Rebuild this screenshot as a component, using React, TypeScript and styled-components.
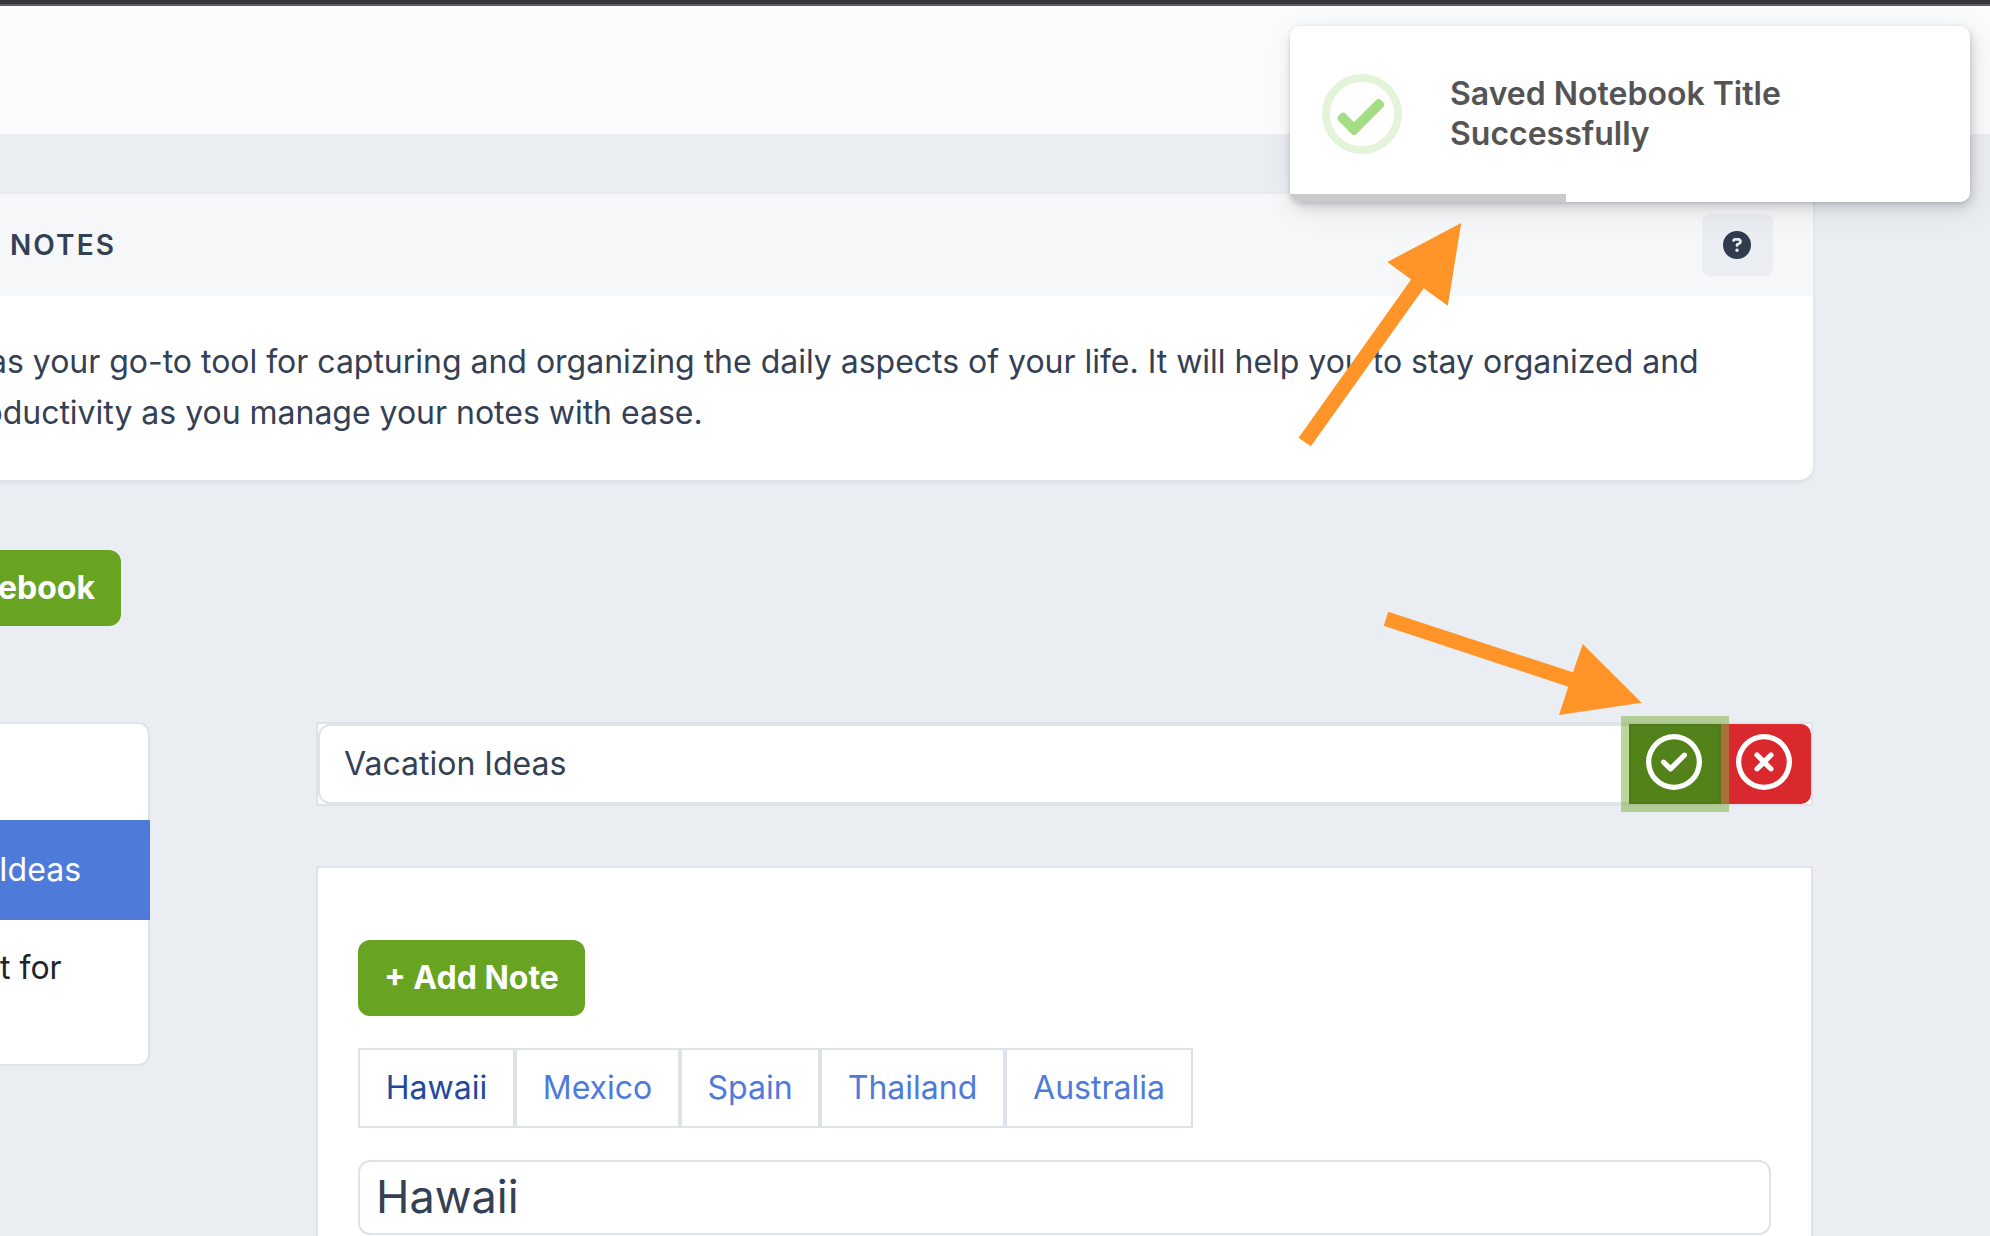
import React from "react";
import styled, { createGlobalStyle, css } from "styled-components";
import { FaRegCircleCheck, FaRegCircleXmark, FaCircleQuestion } from "react-icons/fa6";

const GlobalStyle = createGlobalStyle`
  * { box-sizing: border-box; }
  html, body { margin: 0; padding: 0; }
  body {
    background: #eaeef3;
    color: #344054;
    font-family: Inter, "Liberation Sans", sans-serif;
    font-size: 32px;
    line-height: 48px;
    overflow: hidden;
  }
`;

const Page = styled.div`
  position: relative;
  display: flex;
  flex-direction: column;
  width: 1990px;
  height: 1236px;
  overflow: hidden;
`;

const BrowserEdge = styled.div`
  flex: none;
  height: 6px;
  background: #35363a;
  border-bottom: 2px solid #5e5f63;
`;

const TopBar = styled.header`
  flex: none;
  height: 128px;
  background: #fafbfd;
`;

const Main = styled.main`
  display: flex;
  flex-direction: column;
  flex: none;
  width: 1813px;
  padding-top: 60px;
`;

const Card = styled.section`
  height: 286px;
  margin-left: -20px;
  background: #fff;
  border-bottom-right-radius: 14px;
  box-shadow: 0 2px 4px rgba(53, 64, 82, 0.1);
`;

const CardHeader = styled.div`
  display: flex;
  align-items: center;
  justify-content: space-between;
  height: 102px;
  padding: 0 40px 0 30px;
  background: #f6f7f9;
`;

const CardTitle = styled.h2`
  margin: 0;
  font-size: 28px;
  font-weight: 600;
  letter-spacing: 2.1px;
`;

const HelpButton = styled.button`
  display: flex;
  align-items: center;
  justify-content: center;
  width: 71px;
  height: 62px;
  padding: 0 2px 0 0;
  border: 0;
  border-radius: 8px;
  background: #eaedf2;
  color: #2f3c4e;
  font-size: 28px;
`;

const CardBody = styled.div`
  padding: 40px 0 0 20px;
  line-height: 51px;
  letter-spacing: -0.016px;
`;

const Line = styled.div<{ $shift: number }>`
  margin-left: ${(p) => p.$shift}px;
  white-space: nowrap;
`;

const GreenButton = styled.button<{ $width: number; $clipped?: boolean }>`
  display: flex;
  align-items: center;
  justify-content: ${(p) => (p.$clipped ? "flex-end" : "center")};
  width: ${(p) => p.$width}px;
  height: 76px;
  padding: 0 ${(p) => (p.$clipped ? "26px 0 0" : "0")};
  border: 0;
  border-radius: ${(p) => (p.$clipped ? "0 12px 12px 0" : "12px")};
  background: #68a321;
  color: #fff;
  font: 700 32px/48px Inter, sans-serif;
  white-space: nowrap;
`;

const Actions = styled.div`
  padding: 70px 0 96px;
`;

const Columns = styled.div`
  display: flex;
  justify-content: space-between;
  align-items: flex-start;
`;

const List = styled.ul`
  width: 150px;
  height: 344px;
  margin: 0;
  padding: 0;
  list-style: none;
  background: #fff;
  border: 2px solid #dee3ea;
  border-left: 0;
  border-radius: 0 12px 12px 0;
`;

const ListItem = styled.li<{ $active?: boolean; $height: number }>`
  height: ${(p) => p.$height}px;
  padding: 24px 0;
  color: #212529;
  white-space: nowrap;
  ${(p) =>
    p.$active &&
    css`
      margin-right: -2px;
      padding: 26px 0;
      background: #4e7ada;
      color: #fff;
      text-indent: -1px;
    `}
`;

const Editor = styled.div`
  width: 1497px;
`;

const TitleGroup = styled.div`
  display: flex;
  height: 84px;
  border: 2px solid #dee3ea;
  background: #fff;
`;

const TitleInput = styled.input`
  flex: 1;
  min-width: 0;
  height: 80px;
  padding: 0 24px 2px;
  border: 2px solid #dee3ea;
  border-right: 0;
  border-radius: 12px 0 0 12px;
  outline: 0;
  background: #fff;
  color: #344054;
  font: 400 32px/48px Inter, sans-serif;
`;

const IconButton = styled.button<{ $kind: "save" | "cancel" }>`
  display: flex;
  align-items: center;
  justify-content: center;
  flex: none;
  width: 92px;
  height: 80px;
  padding: 0 2px 4px 0;
  font-size: 56px;
  color: #fff;
  ${(p) =>
    p.$kind === "save"
      ? css`
          position: relative;
          z-index: 1;
          border: 2px solid #4e7a19;
          background: #53821a;
          box-shadow: 0 0 0 8px rgba(127, 177, 66, 0.52);
        `
      : css`
          margin-left: -2px;
          border: 0;
          border-radius: 0 10px 10px 0;
          background: #d9292e;
        `}
`;

const Panel = styled.div`
  height: 420px;
  margin-top: 60px;
  padding: 72px 40px 0;
  border: 2px solid #dee3ea;
  background: #fff;
`;

const Tabs = styled.nav`
  display: flex;
  margin: 32px 0;
`;

const Tab = styled.a<{ $width: number; $active?: boolean }>`
  display: flex;
  align-items: center;
  justify-content: center;
  width: ${(p) => p.$width}px;
  height: 80px;
  border: 2px solid #dee3ea;
  color: ${(p) => (p.$active ? "#2149a0" : "#4e7ada")};
`;

const NoteTitle = styled.input`
  display: block;
  width: 1413px;
  height: 75px;
  padding: 0 16px 2px;
  border: 2px solid #dee3ea;
  border-radius: 12px;
  outline: 0;
  color: #344054;
  font: 400 45px/60px Inter, sans-serif;
`;

const Toast = styled.div`
  position: absolute;
  z-index: 5;
  top: 26px;
  left: 1290px;
  display: flex;
  align-items: center;
  width: 680px;
  height: 176px;
  padding: 0 32px;
  gap: 48px;
  border-radius: 10px;
  overflow: hidden;
  background: #fff;
`;

const ToastShadow = styled.div`
  position: absolute;
  z-index: 4;
  top: 26px;
  left: 1290px;
  width: 680px;
  height: 176px;
  border-radius: 10px;
  box-shadow: 0 0 2px rgba(0, 0, 0, 0.075), 0 2px 4px rgba(0, 0, 0, 0.075),
    2px 4px 8px rgba(0, 0, 0, 0.075), 2px 6px 16px rgba(0, 0, 0, 0.075),
    4px 8px 32px rgba(0, 0, 0, 0.075);
`;

const ToastTitle = styled.h2`
  margin: 0;
  width: 400px;
  color: #545454;
  font-size: 32px;
  font-weight: 600;
  line-height: 40px;
`;

const ToastProgress = styled.div`
  position: absolute;
  bottom: 0;
  left: 0;
  width: 276px;
  height: 8px;
  background: #cacaca;
`;

const Annotations = styled.svg`
  position: absolute;
  z-index: 6;
  top: 0;
  left: 0;
  pointer-events: none;
`;

const tabs = [
  { label: "Hawaii", width: 157 },
  { label: "Mexico", width: 165 },
  { label: "Spain", width: 140 },
  { label: "Thailand", width: 185 },
  { label: "Australia", width: 188 },
];

function SuccessIcon() {
  return (
    <svg width="80" height="80" viewBox="0 0 80 80" fill="none">
      <circle cx="40" cy="40" r="36" stroke="#a5dc86" strokeOpacity=".3" strokeWidth="8" />
      <g transform="translate(32 62.3)" fill="#a5dc86">
        <rect x="-25.5" y="-10" width="25.5" height="10" rx="4" transform="rotate(45)" />
        <rect x="0" y="-10" width="44.8" height="10" rx="4" transform="rotate(-45)" />
      </g>
    </svg>
  );
}

export default function App() {
  return (
    <Page>
      <GlobalStyle />
      <BrowserEdge />
      <TopBar />
      <Main>
        <Card>
          <CardHeader>
            <CardTitle>NOTES</CardTitle>
            <HelpButton aria-label="Help">
              <FaCircleQuestion />
            </HelpButton>
          </CardHeader>
          <CardBody>
            <Line $shift={-11}>
              as your go-to tool for capturing and organizing the daily aspects of your life. It will help you to stay organized and
            </Line>
            <Line $shift={-16.5}>oductivity as you manage your notes with ease.</Line>
          </CardBody>
        </Card>
        <Actions>
          <GreenButton $width={121} $clipped>
            ebook
          </GreenButton>
        </Actions>
        <Columns>
          <List>
            <ListItem $height={96} />
            <ListItem $height={100} $active>
              Ideas
            </ListItem>
            <ListItem $height={144}>t for</ListItem>
          </List>
          <Editor>
            <TitleGroup>
              <TitleInput defaultValue="Vacation Ideas" />
              <IconButton $kind="save" aria-label="Save">
                <FaRegCircleCheck />
              </IconButton>
              <IconButton $kind="cancel" aria-label="Cancel">
                <FaRegCircleXmark />
              </IconButton>
            </TitleGroup>
            <Panel>
              <GreenButton $width={227}>+ Add Note</GreenButton>
              <Tabs>
                {tabs.map((t, i) => (
                  <Tab key={t.label} $width={t.width} $active={i === 0}>
                    {t.label}
                  </Tab>
                ))}
              </Tabs>
              <NoteTitle defaultValue="Hawaii" />
            </Panel>
          </Editor>
        </Columns>
      </Main>
      <ToastShadow />
      <Toast>
        <SuccessIcon />
        <ToastTitle>Saved Notebook Title Successfully</ToastTitle>
        <ToastProgress />
      </Toast>
      <Annotations width="1990" height="1236" fill="#ff9428">
        <path d="M1461.2 223 1387.3 262 1411.1 279.5 1298.6 437.7 1310.8 446.3 1423.7 288.3 1447.8 305.7Z" />
        <path d="M1641.7 702.7 1582.7 644 1573 672.3 1388.3 611.7 1383.7 625.7 1568.3 686.7 1559 715Z" />
      </Annotations>
    </Page>
  );
}
